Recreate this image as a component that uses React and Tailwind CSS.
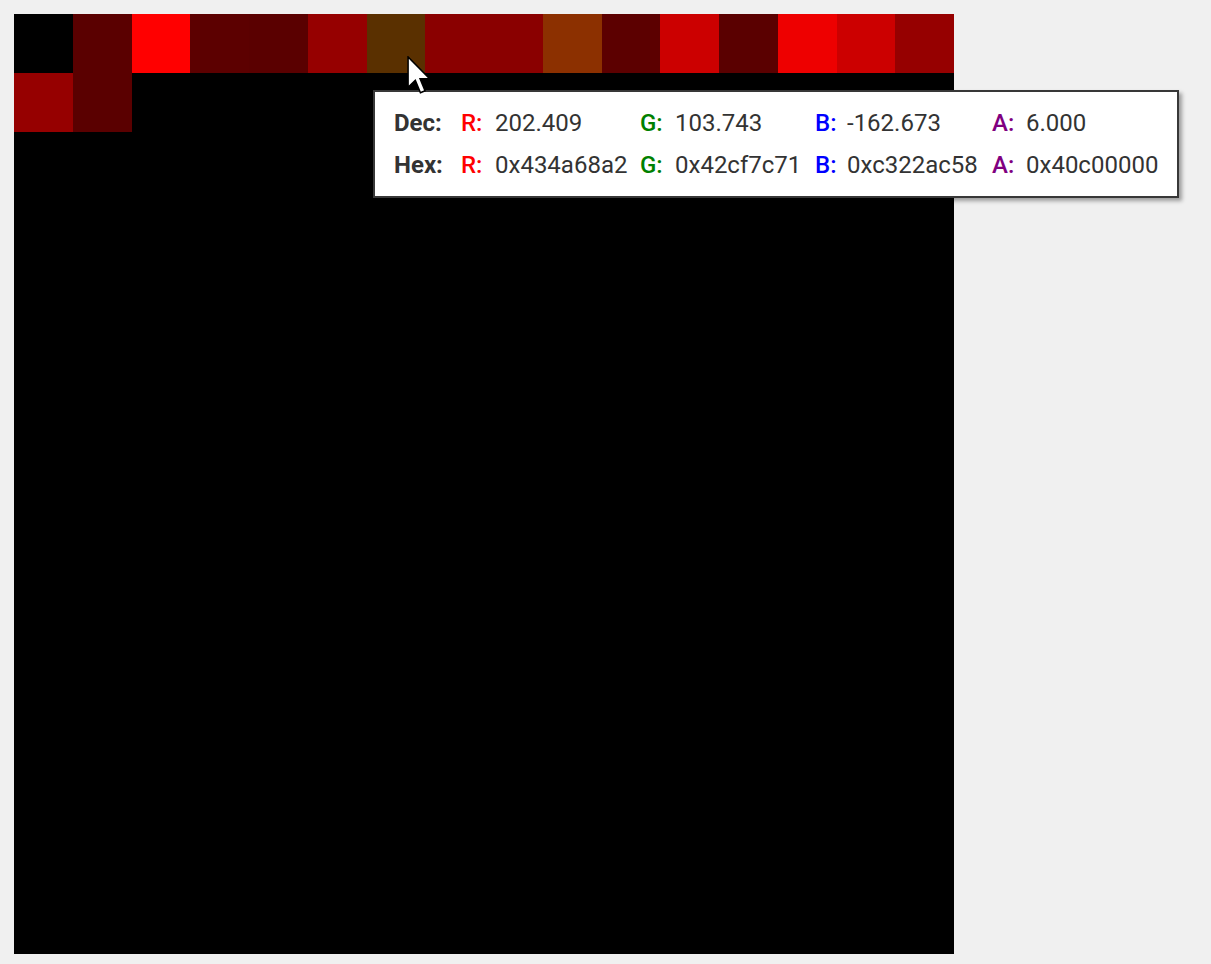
const cells = [
  'bg-[#000000]', 'bg-[#5a0000]', 'bg-[#ff0000]', 'bg-[#5c0000]',
  'bg-[#5a0000]', 'bg-[#960000]', 'bg-[#5a3000]', 'bg-[#8a0000]',
  'bg-[#8a0000]', 'bg-[#8c3000]', 'bg-[#5c0000]', 'bg-[#cc0000]',
  'bg-[#5a0000]', 'bg-[#ee0000]', 'bg-[#cc0000]', 'bg-[#960000]',
  'bg-[#960000]', 'bg-[#5a0000]',
];

const rows = [
  { label: 'Dec:', values: ['202.409', '103.743', '-162.673', '6.000'] },
  { label: 'Hex:', values: ['0x434a68a2', '0x42cf7c71', '0xc322ac58', '0x40c00000'] },
];

const channels = [
  { name: 'R:', color: 'text-[#ff0000]' },
  { name: 'G:', color: 'text-[#008000]' },
  { name: 'B:', color: 'text-[#0000ff]' },
  { name: 'A:', color: 'text-[#800080]' },
];

function Cursor() {
  return (
    <svg width="25" height="39" viewBox="0 0 13 20.5" className="absolute left-[393px] top-[42px] z-20">
      <path
        d="M0.5 0.5 L0.5 16.5 L4.3 12.8 L7 19.3 L9.4 18.3 L6.8 12 L11.8 12 Z"
        fill="#ffffff"
        stroke="#000000"
        strokeWidth="0.8"
        strokeLinejoin="miter"
      />
    </svg>
  );
}

function Tooltip() {
  return (
    <div className="absolute left-[359px] top-[76px] z-10 w-[806px] border-2 border-[#383838] bg-white pl-[19px] pr-4 py-[10px] shadow-[3px_3px_4px_rgba(0,0,0,0.35)] font-['Roboto',sans-serif] text-[24px] leading-[42px] text-[#333333]">
      <div className="grid grid-cols-[67px_34px_145px_35px_140px_32px_145px_34px_1fr]">
        {rows.map(r => (
          <div key={r.label} className="contents">
            <span className="font-bold">{r.label}</span>
            {channels.map((c, i) => (
              <div key={c.name} className="contents">
                <span className={`font-medium ${c.color}`}>{c.name}</span>
                <span className="whitespace-nowrap">{r.values[i]}</span>
              </div>
            ))}
          </div>
        ))}
      </div>
    </div>
  );
}

export default function App() {
  return (
    <div className="min-h-screen bg-[#f0f0f0] p-[14px]">
      <div className="relative w-[940px] h-[940px] bg-black">
        <div className="grid grid-cols-16">
          {cells.map((c, i) => (
            <div key={i} className={`h-[58.75px] ${c}`} />
          ))}
        </div>
        <Tooltip />
        <Cursor />
      </div>
    </div>
  );
}
